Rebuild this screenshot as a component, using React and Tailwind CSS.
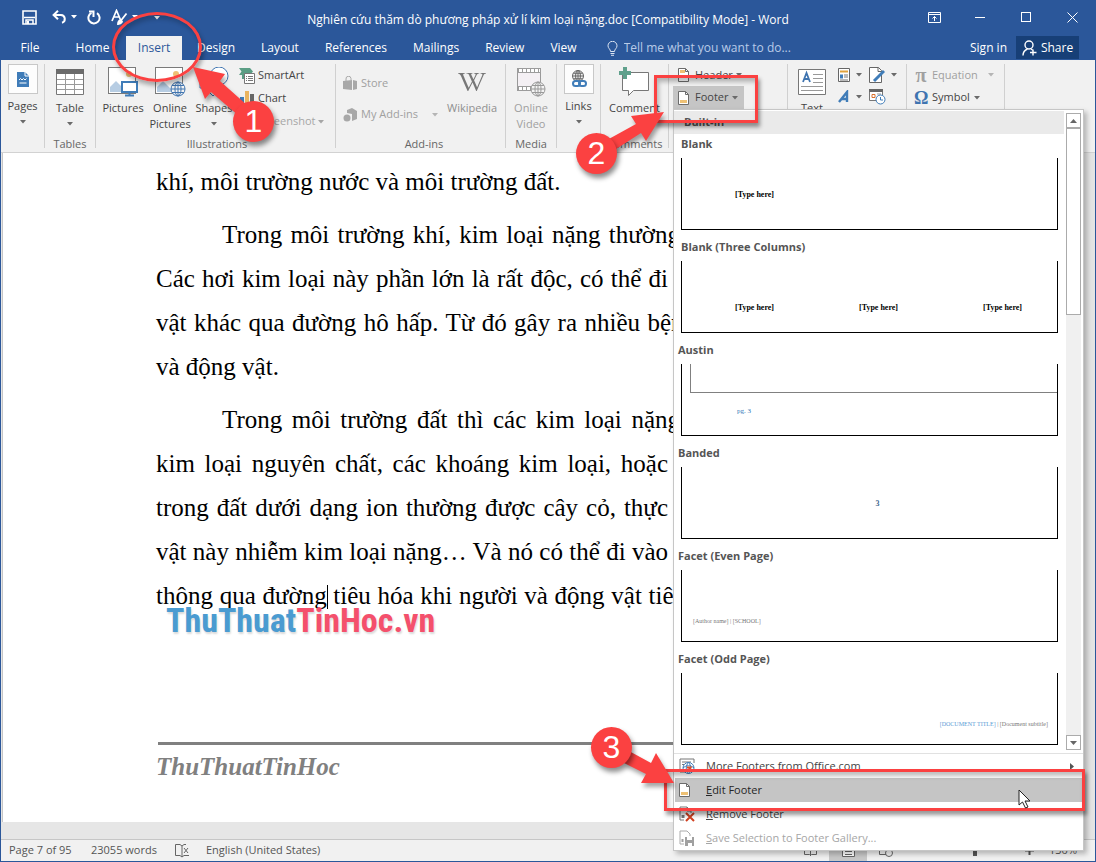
import { FaWikipediaW } from "react-icons/fa";

const tabs = ["Design", "Layout", "References", "Mailings", "Review", "View"];

// Each line carries its own measure; the last line of a paragraph has none
const paragraphs = [
  {
    indent: false,
    lines: [{ text: "khí, môi trường nước và môi trường đất." }],
  },
  {
    indent: true,
    lines: [
      { text: "Trong môi trường khí, kim loại nặng thường", measure: "w-[524px]" },
      { text: "Các hơi kim loại này phần lớn là rất độc, có thể đi", measure: "w-[512px]" },
      { text: "vật khác qua đường hô hấp. Từ đó gây ra nhiều bệnh", measure: "w-[540px]" },
      { text: "và động vật." },
    ],
  },
  {
    indent: true,
    lines: [
      { text: "Trong môi trường đất thì các kim loại nặng", measure: "w-[524px]" },
      { text: "kim loại nguyên chất, các khoáng kim loại, hoặc", measure: "w-[512px]" },
      { text: "trong đất dưới dạng ion thường được cây cỏ, thực", measure: "w-[512px]" },
      { text: "vật này nhiễm kim loại nặng… Và nó có thể đi vào", measure: "w-[512px]" },
      { text: "thông qua đường| tiêu hóa khi người và động vật tiêu", measure: "w-[530px]" },
    ],
  },
];

const Caret = ({ className = "text-[#6a6a6a]" }) => (
  <svg width="6" height="4" viewBox="0 0 6 4" className={`shrink-0 ${className}`}>
    <path d="M0 0h6L3 3.5z" fill="currentColor" />
  </svg>
);

const Sep = () => <div className="w-px shrink-0 my-1 bg-[#d0d0d0]" />;

const Group = ({ label, className, children }) => (
  <section className={`shrink-0 flex flex-col justify-between pt-1 ${className}`}>
    <div className="flex">{children}</div>
    <div className="h-4 leading-4 text-center text-[#666]">{label}</div>
  </section>
);

const BigButton = ({ icon, children, caret, className = "" }) => (
  <button className={`shrink-0 flex flex-col items-center leading-4 ${className}`}>
    <span className="h-9 flex items-center justify-center">{icon}</span>
    <span className="text-center">{children}</span>
    {caret && <span className="h-4 flex items-center"><Caret /></span>}
  </button>
);

// Buttons whose icon sits in a white frame (Pages, Links)
const FramedButton = ({ icon, children }) => (
  <button className="w-full flex flex-col items-center leading-4">
    <span className="size-[30px] mb-1 border border-[#c8c8c8] bg-[#fdfdfd] flex items-center justify-center">
      {icon}
    </span>
    <span>{children}</span>
    <span className="h-4 flex items-center"><Caret /></span>
  </button>
);

const PageIcon = ({ bar = "bottom" }) => (
  <svg width="12" height="14" viewBox="0 0 12 14" className="shrink-0">
    <path d="M.5.5h7l3 3v10H.5z" fill="#fff" stroke="#6b6b6b" />
    <path d="M7.5.5v3h3" fill="none" stroke="#6b6b6b" />
    <rect x="2" y={bar === "bottom" ? 9 : 2} width={bar === "bottom" ? 7 : 5} height="3" fill="#eec175" />
  </svg>
);

const Globe = ({ x, y, r, color, width = 1 }) => (
  <g fill="none" stroke={color} strokeWidth={width}>
    <circle cx={x} cy={y} r={r} fill="#f3f3f3" />
    <ellipse cx={x} cy={y} rx={r / 2.3} ry={r} />
    <path d={`M${x} ${y - r}v${r * 2}M${x - r} ${y}h${r * 2}M${x - r * 0.85} ${y - r / 2}h${r * 1.7}M${x - r * 0.85} ${y + r / 2}h${r * 1.7}`} />
  </g>
);

const PictureIcon = ({ online }) => (
  <svg width="31" height="30" viewBox="0 0 31 30">
    <rect x=".5" y=".5" width="27" height="26" fill="#fff" stroke="#7a7a7a" />
    <circle cx="21" cy="7" r="3" fill="#eec175" />
    <path d="M2 25v-5l6-6 11 11z" fill="#b7cde3" />
    {online ? (
      <Globe x={23} y={22} r={7} color="#3f74b0" />
    ) : (
      <g>
        <rect x="14" y="15" width="15" height="10" fill="#fff" stroke="#3f7cb8" strokeWidth="2" />
        <path d="M21.5 25v3M17 28.5h9" stroke="#3f7cb8" strokeWidth="2" />
      </g>
    )}
  </svg>
);

const TitleBar = () => (
  <header className="h-[33px] grid grid-cols-[1fr_auto_1fr] text-white">
    <div className="h-8 flex items-center pl-[21px]">
      <button aria-label="Save">
        <svg width="15" height="15" viewBox="0 0 15 15">
          <path d="M1 1h13v13H1z" fill="none" stroke="#fff" strokeWidth="1.6" />
          <path d="M2 7.5h11M4 14v-4h7v4" fill="none" stroke="#fff" strokeWidth="1.5" />
          <path d="M5 11h2v3H5z" fill="#fff" />
        </svg>
      </button>
      <button aria-label="Undo" className="ml-[15px] flex items-center gap-1">
        <svg width="15" height="14" viewBox="0 0 15 14">
          <path d="M6 .8L1.6 5 6 9.2M2 5h7a4 4 0 0 1 1 7.8" fill="none" stroke="#fff" strokeWidth="2" />
        </svg>
        <Caret className="text-white" />
      </button>
      <button aria-label="Repeat" className="ml-2.5">
        <svg width="14" height="15" viewBox="0 0 14 15">
          <path d="M4.500 2.800a5.600 5.600 0 1 0 5.500.3" fill="none" stroke="#fff" strokeWidth="2" />
          <path d="M2 1.500h4.500V7" fill="none" stroke="#fff" strokeWidth="2" />
        </svg>
      </button>
      <button aria-label="Format" className="ml-2.5 flex items-center gap-1">
        <svg width="17" height="16" viewBox="0 0 17 16">
          <path d="M1 12L5.5 1.5 10 12M2.7 8h5.6" fill="none" stroke="#fff" strokeWidth="1.7" />
          <path d="M15.5 4.5L10 11.5M7 15c0-2 1-4 3-3.5s1 3-3 3.5z" fill="#fff" stroke="#fff" strokeWidth="1.8" />
        </svg>
        <Caret className="text-white" />
      </button>
      <button aria-label="Customize" className="ml-4">
        <svg width="6" height="8" viewBox="0 0 6 8">
          <path d="M0 .5h6" stroke="#fff" />
          <path d="M0 3h6L3 6.5z" fill="#fff" />
        </svg>
      </button>
    </div>
    <h1 className="leading-[38px] text-xs whitespace-nowrap">
      Nghiên cứu thăm dò phương pháp xử lí kim loại nặng.doc [Compatibility Mode] - Word
    </h1>
    <div className="h-8 flex justify-end">
      <button aria-label="Ribbon display options" className="w-[46px] flex items-center justify-center">
        <svg width="13" height="11" viewBox="0 0 13 11" fill="none" stroke="#fff">
          <path d="M.5.5h12v10H.5zM.5 2.5h12M6.5 9V4.5M4.5 6.5l2-2 2 2" />
        </svg>
      </button>
      <button aria-label="Minimize" className="w-[46px] flex items-center justify-center">
        <span className="w-2.5 h-px bg-white" />
      </button>
      <button aria-label="Maximize" className="w-[46px] flex items-center justify-center">
        <span className="size-2.5 border border-white" />
      </button>
      <button aria-label="Close" className="w-[46px] flex items-center justify-center">
        <svg width="11" height="11" viewBox="0 0 11 11" stroke="#fff">
          <path d="M.5.5l10 10M10.5.5l-10 10" />
        </svg>
      </button>
    </div>
  </header>
);

const TabBar = () => (
  <nav className="h-[26px] flex items-stretch pt-0.5 text-xs text-white whitespace-nowrap">
    <button className="w-[58px]">File</button>
    <button className="w-[67px]">Home</button>
    <button className="w-14 bg-[#f1f1f1] text-[#2b579a]">Insert</button>
    <div className="flex pl-0.5">
      {tabs.map((tab) => (
        <button key={tab} className="px-[13px]">{tab}</button>
      ))}
    </div>
    <label className="flex-1 min-w-0 flex items-center gap-1.5 pl-[17px]">
      <svg width="11" height="15" viewBox="0 0 11 15" fill="none" stroke="#dbe4f2">
        <path d="M3.5 10.5C3.5 8 1 7.500 1 4.800a4.400 4.400 0 0 1 9 0c0 2.700-2.500 3.200-2.500 5.700zM3.500 12.500h4M4 14.300h3" />
      </svg>
      <input
        className="w-44 text-white placeholder:text-[#b9cbe8] outline-none"
        type="text"
        placeholder="Tell me what you want to do..."
      />
    </label>
    <button className="mr-[9px]">Sign in</button>
    <button className="w-[63px] mr-4 mb-px bg-[#173f77] flex items-center justify-center gap-1">
      <svg width="15" height="16" viewBox="0 0 15 16" fill="none" stroke="#fff" strokeWidth="1.400">
        <circle cx="7" cy="5" r="4" />
        <path d="M1 15.500c0-3.500 2-5.500 4.500-6.500M9 9l1.500 1M11 9.500v6M8 12.500h6.500" />
      </svg>
      Share
    </button>
  </nav>
);

const galleryItems = [
  { title: "Blank", titleClass: "pl-[7px]", kind: "blank" },
  { title: "Blank (Three Columns)", titleClass: "pl-[7px]", kind: "three" },
  { title: "Austin", titleClass: "pl-1", kind: "austin" },
  { title: "Banded", titleClass: "pl-1", kind: "banded" },
  { title: "Facet (Even Page)", titleClass: "pl-1", kind: "even" },
  { title: "Facet (Odd Page)", titleClass: "pl-1", kind: "odd" },
];

const Preview = ({ kind }) => {
  switch (kind) {
    case "blank":
      return <div className="pt-[31px] pl-[53px] font-bold text-black">[Type here]</div>;
    case "three":
      return (
        <div className="pt-[41px] pl-[53px] pr-[35px] flex justify-between font-bold text-black">
          <span>[Type here]</span>
          <span>[Type here]</span>
          <span>[Type here]</span>
        </div>
      );
    case "austin":
      return (
        <div>
          <div className="ml-2 h-[29px] border-l border-b border-[#808080]" />
          <div className="pt-3 pl-[55px] text-[7px] text-[#2e74b5]">pg. 3</div>
        </div>
      );
    case "banded":
      return <div className="pt-[31px] pl-4 text-center font-bold text-[#44688f]">3</div>;
    case "even":
      return <div className="pt-[45px] pl-[11px] text-[6px] text-[#777]">[Author name] | [SCHOOL]</div>;
    default:
      return (
        <div className="pt-[45px] pr-[9px] text-right text-[6px] text-[#777]">
          <span className="text-[#5b9bd5]">[DOCUMENT TITLE]</span> | [Document subtitle]
        </div>
      );
  }
};

const MenuRow = ({ icon, className = "text-[#444]", children }) => (
  <button className={`h-6 mx-px w-[407px] pl-1 flex items-center text-left ${className}`}>
    <span className="w-[27px] flex">{icon}</span>
    {children}
  </button>
);

const FooterMenu = () => (
  <div className="absolute z-10 top-full left-0 w-[411px] bg-white border border-[#c6c6c6] shadow-[3px_3px_5px_rgba(0,0,0,0.25)]">
    <div className="flex border-b border-[#e1e1e1]">
      <div className="flex-1 pb-px">
        <div className="h-[23px] pl-2.5 mt-px mr-0.5 bg-[#eaeaea] font-bold leading-[22px] text-[#555]">Built-in</div>
        {galleryItems.map(({ title, titleClass, kind }) => (
          <div key={title} className="h-[103px]">
            <div className={`h-6 leading-5 font-bold text-[#555] ${titleClass}`}>{title}</div>
            <button className="block h-[72px] ml-[7px] w-[377px] border border-t-0 border-black bg-white font-['Liberation_Serif',serif] text-[8px] leading-[12px] text-left">
              <span className="block h-full"><Preview kind={kind} /></span>
            </button>
          </div>
        ))}
      </div>
      <div className="w-[15px] mr-0.5 my-[3px] flex flex-col bg-[#f0f0f0]">
        <button aria-label="Scroll up" className="h-[15px] border border-[#ababab] bg-white flex items-center justify-center">
          <svg width="7" height="4" viewBox="0 0 7 4"><path d="M0 4h7L3.500 0z" fill="#666" /></svg>
        </button>
        <div className="h-[187px] border border-[#ababab] bg-white" />
        <button aria-label="Scroll down" className="mt-auto h-[15px] border border-[#ababab] bg-white flex items-center justify-center">
          <svg width="7" height="4" viewBox="0 0 7 4"><path d="M0 0h7L3.500 4z" fill="#666" /></svg>
        </button>
      </div>
    </div>
    <MenuRow
      icon={
        <svg width="16" height="16" viewBox="0 0 16 16">
          <path d="M15 5V1H1v13h5M3 4h9M3 6.500h2" fill="none" stroke="#777" />
          <g fill="none" stroke="#3f7cb8">
            <circle cx="9.500" cy="10" r="5.500" fill="#fff" />
            <path d="M4 10c3-3 8-3 11 0M9.500 4.500c-3 3-3 8 0 11c3-3 3-8 0-11" />
          </g>
          <path d="M8 9.500h3.500l-2 3" fill="none" stroke="#d9532c" strokeWidth="2" />
        </svg>
      }
    >
      <span><u>M</u>ore Footers from Office.com</span>
      <svg width="4" height="7" viewBox="0 0 4 7" className="ml-auto mr-2"><path d="M0 0v7l4-3.500z" fill="#555" /></svg>
    </MenuRow>
    <MenuRow icon={<PageIcon />} className="bg-[#c5c5c5] text-[#262626]">
      <span><u>E</u>dit Footer</span>
    </MenuRow>
    <MenuRow
      icon={
        <svg width="16" height="16" viewBox="0 0 16 16">
          <path d="M5 14H1V1h7l4 4v2M8 1v4h4" fill="none" stroke="#777" />
          <path d="M2.500 9h3v3h-3z" fill="#777" />
          <path d="M7 7l8 8M15 7l-8 8" stroke="#d13f1f" strokeWidth="2" />
        </svg>
      }
    >
      <span><u>R</u>emove Footer</span>
    </MenuRow>
    <MenuRow
      className="text-[#a6a6a6]"
      icon={
        <svg width="16" height="16" viewBox="0 0 16 16">
          <path d="M5 14H1V1h7l3 3v2" fill="none" stroke="#aaa" />
          <path d="M2.500 9h2v3h-2zM6 7h9v9H6z" fill="#a0a0a0" />
          <path d="M8 7h5v3H8zM9 13h4v3H9z" fill="#fff" />
        </svg>
      }
    >
      <span><u>S</u>ave Selection to Footer Gallery...</span>
    </MenuRow>
  </div>
);

const Ribbon = () => (
  <div className="h-[93px] flex bg-[#f1f1f1] border-b border-[#d2d2d2] text-[11px] text-[#444] whitespace-nowrap">
    <Group className="w-[43px]">
      <FramedButton
        icon={
          <svg width="12" height="15" viewBox="0 0 12 15">
            <path d="M0 0h8l4 4v11H0z" fill="#3f7cb8" />
            <path d="M8 0v4h4" fill="none" stroke="#fff" />
            <path d="M2 8l1.500-1.500L5 8l1.500-1.500L8 8l1.500-1.500M2.500 11h7" fill="none" stroke="#fff" />
          </svg>
        }
      >
        Pages
      </FramedButton>
    </Group>
    <Sep />
    <Group label="Tables" className="w-[50px]">
      <BigButton
        className="w-full"
        caret
        icon={
          <svg width="28" height="26" viewBox="0 0 28 26">
            <path d="M.5.5h27v25H.5z" fill="#fff" stroke="#777" />
            <path d="M0 0h28v5H0z" fill="#6b6b6b" />
            <path d="M1 10.500h26M1 15.500h26M1 20.500h26M9.500 5v20M18.500 5v20" stroke="#9a9a9a" />
          </svg>
        }
      >
        Table
      </BigButton>
    </Group>
    <Sep />
    <Group label="Illustrations" className="w-[239px] pl-[3px]">
      <BigButton className="w-12" icon={<PictureIcon />}>Pictures</BigButton>
      <BigButton className="w-[46px]" icon={<PictureIcon online />}>Online<br />Pictures</BigButton>
      <BigButton
        className="w-[42px]"
        caret
        icon={
          <svg width="30" height="30" viewBox="0 0 30 30" fill="#fff" stroke="#3f74b0">
            <circle cx="20" cy="9" r="9" />
            <path d="M1 8h15v13H1zM14 17l6 6-6 6-6-6z" />
          </svg>
        }
      >
        Shapes
      </BigButton>
      <div className="flex flex-col pl-1">
        <button className="h-[23px] flex items-center gap-[3px]">
          <svg width="16" height="16" viewBox="0 0 16 16">
            <path d="M0 0h11l3 3.500L11 7H5v4H3V7H0l2.500-3.500z" fill="#5b9e85" />
            <path d="M5.500 5.500h10v10h-10z" fill="#fff" stroke="#777" />
            <path d="M7 8.500h1M9 8.500h5M7 10.500h1M9 10.500h5M7 12.500h1M9 12.500h5" stroke="#777" />
          </svg>
          SmartArt
        </button>
        <button className="h-[23px] flex items-center gap-[3px]">
          <svg width="16" height="15" viewBox="0 0 16 15">
            <path d="M1 6h4v9H1z" fill="#3f7cb8" />
            <path d="M6 0h4v15H6z" fill="#eab45f" />
            <path d="M11 3h4v12h-4z" fill="#666" />
          </svg>
          Chart
        </button>
        <button className="h-[23px] flex items-center gap-[3px] text-[#a6a6a6]">
          <svg width="16" height="12" viewBox="0 0 16 12"><path d="M1 2h14v9H1zM5 0h5v2H5z" fill="#b0b0b0" /></svg>
          Screenshot
          <Caret className="text-[#a6a6a6]" />
        </button>
      </div>
    </Group>
    <Sep />
    <Group label="Add-ins" className="w-[169px] pl-[7px]">
      <div className="w-[101px] flex flex-col pt-1 text-[#a0a0a0]">
        <button className="h-[31px] flex items-center gap-1">
          <svg width="14" height="15" viewBox="0 0 14 15">
            <path d="M0 5l9-1v10l-9-1zM10 4l4 1v8l-4 1z" fill="#a8a8a8" />
            <path d="M3 5V3a2.500 2.500 0 0 1 5-.5V4" fill="none" stroke="#a8a8a8" />
          </svg>
          Store
        </button>
        <button className="h-[31px] flex items-center gap-1">
          <svg width="14" height="14" viewBox="0 0 14 14" fill="#a8a8a8">
            <path d="M4 2l5-2 5 3v8l-5 2V6L4 5z" />
            <circle cx="4" cy="10" r="3.500" />
          </svg>
          My Add-ins
          <Caret className="ml-2.5 text-[#b5b5b5]" />
        </button>
      </div>
      <BigButton className="w-14 text-[#8f8f8f]" icon={<FaWikipediaW className="size-7 text-[#777]" />}>
        Wikipedia
      </BigButton>
    </Group>
    <Sep />
    <Group label="Media" className="w-[50px]">
      <BigButton
        className="w-full text-[#a0a0a0]"
        icon={
          <svg width="29" height="29" viewBox="0 0 29 29">
            <path d="M.5.5h23v22H.5z" fill="#f4f0f4" stroke="#999" />
            <path d="M0 2.500h24M0 20.500h24" stroke="#9c9c9c" strokeWidth="5" />
            <path d="M2 2.500h21M2 20.500h21" stroke="#fff" strokeWidth="3" strokeDasharray="3 1" />
            <Globe x={21} y={21} r={7} color="#999" />
          </svg>
        }
      >
        Online<br />Video
      </BigButton>
    </Group>
    <Sep />
    <Group className="w-[43px]">
      <FramedButton
        icon={
          <svg width="16" height="18" viewBox="0 0 16 18">
            <Globe x={7} y={6} r={5.5} color="#666" />
            <g fill="none" stroke="#3f7cb8" strokeWidth="2">
              <rect x="2" y="11" width="7" height="5" rx="2.500" />
              <rect x="8" y="11" width="7" height="5" rx="2.500" />
            </g>
          </svg>
        }
      >
        Links
      </FramedButton>
    </Group>
    <Sep />
    <Group label="Comments" className="w-[67px]">
      <BigButton
        className="w-full"
        icon={
          <svg width="31" height="30" viewBox="0 0 31 30">
            <path d="M3.500 5.500h26v18h-15l-5 5v-5h-6z" fill="#fff" stroke="#777" />
            <path d="M6 0v12M0 6h12" stroke="#5fa08c" strokeWidth="4" />
          </svg>
        }
      >
        Comment
      </BigButton>
    </Group>
    <Sep />
    <Group className="w-[118px] pl-1">
      <div>
        <button className="h-[22px] pl-[5px] flex items-center gap-[3px]">
          <PageIcon bar="top" />
          <span className="pl-0.5">Header</span>
          <Caret />
        </button>
        <div className="relative">
          <button className="h-[23px] w-[71px] pl-[5px] flex items-center gap-[3px] bg-[#c5c5c5]">
            <PageIcon />
            <span className="pl-0.5">Footer</span>
            <Caret />
          </button>
          <FooterMenu />
        </div>
      </div>
    </Group>
    <Sep />
    <Group className="w-[118px] pl-1">
      <BigButton
        className="w-10"
        icon={
          <svg width="28" height="26" viewBox="0 0 28 26">
            <path d="M.5.5h27v25H.5z" fill="#fff" stroke="#777" />
            <path d="M5 13L8.500 4 12 13M6 10h5" fill="none" stroke="#3f74b0" strokeWidth="1.800" />
            <path d="M15 5.500h10M15 9.500h10M15 13.500h10M3 17.500h22M3 21.500h22" stroke="#999" />
          </svg>
        }
      >
        Text
      </BigButton>
      <div className="pl-1.5 grid grid-cols-[31px_31px] auto-rows-[22px]">
        <button aria-label="Quick parts" className="flex items-center gap-1.5">
          <svg width="12" height="14" viewBox="0 0 12 14">
            <path d="M.5.5h11v13H.5z" fill="#fff" stroke="#666" />
            <path d="M2 3.500h8" stroke="#e0a23c" strokeWidth="2" />
            <path d="M2 6.500h3v4H2z" fill="#3f7cb8" />
            <path d="M6 7h4M6 9h4M2 12h8" stroke="#777" />
          </svg>
          <Caret />
        </button>
        <button aria-label="Signature line" className="flex items-center gap-1.5">
          <svg width="16" height="16" viewBox="0 0 16 16">
            <path d="M.5.5h9l3 3v12H.5z" fill="#fff" stroke="#666" />
            <path d="M9 .5v4h3.500" fill="none" stroke="#666" />
            <path d="M15 4L7 12l-2 2" stroke="#3f7cb8" strokeWidth="3" />
          </svg>
          <Caret />
        </button>
        <button aria-label="WordArt" className="flex items-center gap-1.5">
          <svg width="12" height="14" viewBox="0 0 12 14">
            <path d="M1 12L9 2v10M4 9h5" fill="none" stroke="#3f7cb8" strokeWidth="2.400" />
          </svg>
          <Caret />
        </button>
        <button aria-label="Date and time" className="flex items-center">
          <svg width="17" height="16" viewBox="0 0 17 16">
            <path d="M.5.500h13v11H.5z" fill="#fff" stroke="#777" />
            <path d="M0 1.500h14" stroke="#666" strokeWidth="3" />
            <path d="M3 5.500h3v3H3z" fill="#fff" stroke="#d9702c" />
            <path d="M8 5h4M8 8h2" stroke="#999" />
            <circle cx="11.500" cy="10.500" r="4.500" fill="#fff" stroke="#3f7cb8" />
            <path d="M11.500 8v3h2.500" fill="none" stroke="#3f7cb8" />
          </svg>
        </button>
      </div>
    </Group>
    <Sep />
    <Group className="w-[97px] pl-[7px]">
      <div>
        <button className="h-[22px] flex items-center gap-1 text-[#a0a0a0]">
          <span className="w-3.5 font-['Liberation_Serif',serif] text-xl leading-5 font-bold">π</span>
          Equation
          <Caret className="ml-1.5 text-[#b5b5b5]" />
        </button>
        <button className="h-[23px] flex items-center gap-1">
          <span className="w-3.5 font-['Liberation_Serif',serif] text-lg leading-5 font-bold text-[#3f74b0]">Ω</span>
          Symbol
          <Caret />
        </button>
      </div>
    </Group>
    <Sep />
  </div>
);

const Line = ({ text, measure, indent }) => {
  const [before, after] = text.split("|");
  return (
    <span className={`block ${measure ? `${measure} [text-align-last:justify]` : ""} ${indent ? "pl-[66px]" : ""}`}>
      {before}
      {after !== undefined && <i className="inline-block w-px h-6 -mr-px align-[-5px] bg-black" />}
      {after}
    </span>
  );
};

const Document = () => (
  <main className="flex-1 flex bg-[#e6e6e6]">
    <div className="relative flex-1 min-w-0 mb-[17px] ml-px border-l border-[#c6c6c6] bg-white overflow-hidden">
      <div className="ml-[153px] pt-[7px] text-black font-['Liberation_Serif',serif] text-[25px]">
        {paragraphs.map(({ indent, lines }) => (
          <p key={lines[0].text} className="mb-[9px] leading-[44px] whitespace-nowrap">
            {lines.map(({ text, measure }, i) => (
              <Line key={text} text={text} measure={measure} indent={indent && i === 0} />
            ))}
          </p>
        ))}
        <footer className="mt-[124px] ml-0.5 border-t-[3px] border-[#808080]">
          <p className="-ml-0.5 pt-1 leading-9 font-bold italic text-[#808080]">ThuThuatTinHoc</p>
        </footer>
      </div>
      {/* Site watermark stamped over the text */}
      <div className="absolute top-[451px] left-[163px] leading-8 text-[34px] font-bold font-['Liberation_Sans_Narrow','Roboto_Condensed','Liberation_Sans',sans-serif] [text-shadow:1px_2px_2px_rgba(0,0,0,0.15)]">
        <span className="text-[#4a9bd1]">ThuThuat</span>
        <span className="text-[#f4506c]">TinHoc.vn</span>
      </div>
    </div>
    <div className="w-4 bg-[#e4e4e4]" />
  </main>
);

const StatusBar = () => (
  <footer className="h-[22px] flex items-center border-t border-[#c6c6c6] bg-[#f1f1f1] pl-2 text-[11px] text-[#555]">
    <span className="w-[82px]">Page 7 of 95</span>
    <span className="w-[84px]">23055 words</span>
    <svg width="15" height="14" viewBox="0 0 15 14" fill="none" stroke="#666">
      <path d="M7 2L5 .5H.5v11H5L7 13l2-1.500h5M7 2v11M7 2l2-1.500h2M9 4l4 5M13 4L9 9" />
    </svg>
    <span className="ml-4">English (United States)</span>
    <div className="ml-auto h-full flex items-center pr-[18px]">
      <button aria-label="Read mode" className="w-[38px] flex justify-center">
        <svg width="13" height="13" viewBox="0 0 13 13" fill="none" stroke="#666"><path d="M.5.500h5l1 1 1-1h5v10h-5l-1 1-1-1h-5zM6.500 1v11" /></svg>
      </button>
      <button aria-label="Print layout" className="w-[38px] h-full bg-[#c8c8c8] flex items-center justify-center">
        <svg width="13" height="13" viewBox="0 0 13 13" fill="#fff" stroke="#666"><path d="M.5.500h12v12H.5zM3 4.500h7M3 7.500h7M3 10.500h7" /></svg>
      </button>
      <button aria-label="Web layout" className="w-[38px] flex justify-center">
        <svg width="14" height="13" viewBox="0 0 14 13" fill="none" stroke="#666"><path d="M7 10.500H.5V.5h12V5" /><circle cx="10" cy="9" r="3.500" /></svg>
      </button>
      <input
        aria-label="Zoom"
        type="range"
        min="0"
        max="220"
        defaultValue="130"
        className="w-[106px] ml-2 h-px appearance-none bg-[#888] [&::-webkit-slider-thumb]:appearance-none [&::-webkit-slider-thumb]:w-1 [&::-webkit-slider-thumb]:h-2.5 [&::-webkit-slider-thumb]:bg-[#555]"
      />
      <button aria-label="Zoom in" className="w-5 mr-2.5 flex justify-center">
        <svg width="9" height="9" viewBox="0 0 9 9" stroke="#555" strokeWidth="2"><path d="M4.500 0v9M0 4.500h9" /></svg>
      </button>
      <span>130%</span>
    </div>
  </footer>
);

const Badge = ({ className, children }) => (
  <div className={`absolute size-[41px] rounded-full bg-[#fb4141] text-white text-center text-[32px] leading-10 font-['Liberation_Sans',sans-serif] shadow-[2px_4px_5px_rgba(0,0,0,0.45)] ${className}`}>
    {children}
  </div>
);

const Arrow = ({ className, width, height, d }) => (
  <svg width={width} height={height} viewBox={`0 0 ${width} ${height}`} className={`absolute drop-shadow-[2px_4px_2px_rgba(0,0,0,0.35)] ${className}`}>
    <path d={d} fill="#fb4141" />
  </svg>
);

// Red step markers drawn over the window
const Callouts = () => (
  <div className="absolute -inset-px z-20 pointer-events-none">
    <div className="absolute left-[112px] top-[12px] w-[90px] h-[70px] rounded-[50%] border-[3px] border-[#fb4141] shadow-[2px_4px_4px_rgba(0,0,0,0.3),inset_2px_4px_4px_rgba(0,0,0,0.2)]" />
    <Arrow className="left-[193px] top-[65px]" width={60} height={56} d="M0 2L32 9l-5 7 28 25-9 10L18 27l-6 7z" />
    <Badge className="left-[233px] top-[101px]">1</Badge>

    <div className="absolute left-[654px] top-[75px] w-[104px] h-[48px] border-[3px] border-[#fb4141] shadow-[2px_4px_4px_rgba(0,0,0,0.4),inset_2px_4px_4px_rgba(0,0,0,0.25)]" />
    <Arrow className="left-[600px] top-[111px]" width={66} height={46} d="M64 1L46 30l-5-8-28 18-6-11 29-16-5-8z" />
    <Badge className="left-[576px] top-[133px]">2</Badge>

    <div className="absolute left-[664px] right-[11px] top-[769px] h-[42px] border-[3px] border-[#fb4141] shadow-[2px_4px_4px_rgba(0,0,0,0.4),inset_2px_4px_4px_rgba(0,0,0,0.25)]" />
    <Arrow className="left-[614px] top-[745px]" width={62} height={40} d="M60 38L27 38l5-9L10 18l5-12 22 12 5-10z" />
    <Badge className="left-[591px] top-[727px]">3</Badge>

    <svg width="14" height="20" viewBox="0 0 14 20" className="absolute left-[1018px] top-[789px]">
      <path d="M1 1v15l3.500-3 3 6 2.500-1-3-6h5z" fill="#fff" stroke="#222" />
    </svg>
  </div>
);

const App = () => {
  return (
    <div className="relative min-h-screen flex flex-col overflow-hidden border border-[#2b579a] bg-[#2b579a] font-['Open_Sans','Noto_Sans',sans-serif]">
      <TitleBar />
      <TabBar />
      <Ribbon />
      <Document />
      <StatusBar />
      <Callouts />
    </div>
  );
};

export default App;
